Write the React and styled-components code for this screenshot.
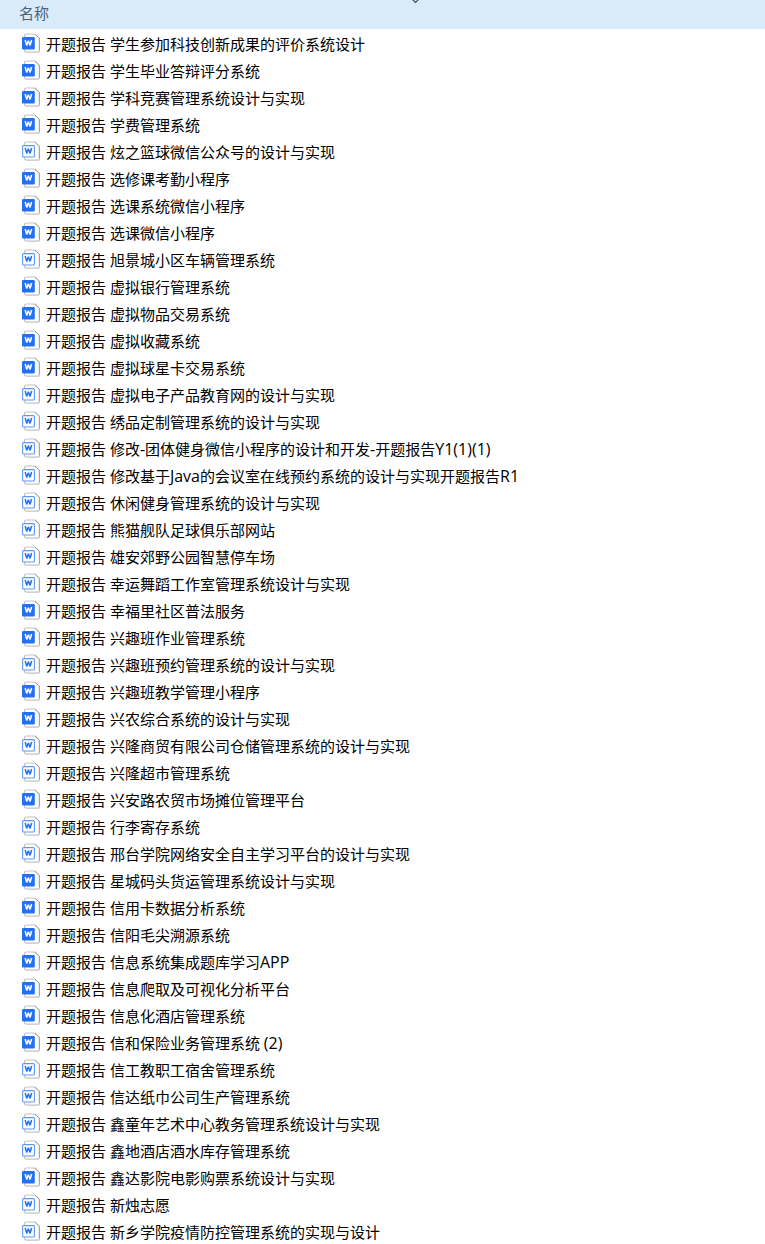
import React from 'react';
import styled, { createGlobalStyle } from 'styled-components';

const GlobalStyle = createGlobalStyle`
  body {
    margin: 0;
    background: #ffffff;
    color: #000000;
    font-family: 'Open Sans', 'Noto Sans CJK SC', sans-serif;
  }
`;

const Pane = styled.main`
  height: 100vh;
  overflow-x: hidden;
  overflow-y: auto;
  scrollbar-width: none;
`;

const FileTable = styled.table`
  width: 100%;
  border-collapse: collapse;
`;

const HeaderCell = styled.th`
  position: relative;
  height: 29px;
  padding: 0;
  background: #d9ebf9;
  text-align: left;
`;

const SortButton = styled.button`
  display: block;
  width: 100%;
  height: 29px;
  padding: 0 0 2px 19px;
  border: 0;
  background: transparent;
  color: #4c607a;
  font: inherit;
  font-size: 15px;
  font-weight: 400;
  line-height: 27px;
  text-align: left;
`;

const SortArrow = styled.svg`
  position: absolute;
  top: 0;
  left: 411px;
  width: 9px;
  height: 4px;
`;

const FileBody = styled.tbody`
  &::before {
    content: '';
    display: block;
    height: 2px;
  }
`;

const FileCell = styled.td`
  height: 27px;
  padding: 0;
`;

const FileEntry = styled.div`
  display: flex;
  align-items: center;
  gap: 6px;
  height: 27px;
  padding-left: 22px;
  overflow: hidden;
`;

const FileIcon = styled.svg`
  flex: none;
  width: 18px;
  height: 20px;
  margin-bottom: 3px;
`;

const FileName = styled.span`
  font-size: 15px;
  line-height: 27px;
  white-space: nowrap;
`;

const Latin = styled.span`
  font-size: 16px;
`;

function WordIcon({ filled }) {
  return (
    <FileIcon viewBox="0 0 18 20" fill="none" aria-hidden="true">
      <path
        d="M2.5 4V3Q2.5 1 4.5 1H13L17.4 5.4V17.2Q17.4 19.2 15.2 19.2H4.8Q2.5 19.2 2.5 17V16"
        fill="#ffffff"
        stroke="#c4c4c4"
        strokeWidth="1.2"
      />
      <path d="M13 1L17.4 5.4V17.5" stroke="#a0a0a0" />
      {filled ? (
        <rect x="0" y="4" width="12.8" height="12.4" rx="1.2" fill="#2370f5" />
      ) : (
        <rect x=".6" y="4.6" width="11.8" height="11.4" rx="1" fill="#ffffff" stroke="#5c98fa" strokeWidth="1.1" />
      )}
      <path
        d="M3.2 7L4.7 12.4L6.4 7.8L8.1 12.4L9.6 7"
        stroke={filled ? '#ffffff' : '#2370f5'}
        strokeWidth="1.5"
        strokeLinejoin="bevel"
      />
    </FileIcon>
  );
}

const files = [
  ['学生参加科技创新成果的评价系统设计', true],
  ['学生毕业答辩评分系统', true],
  ['学科竞赛管理系统设计与实现', true],
  ['学费管理系统', true],
  ['炫之篮球微信公众号的设计与实现', false],
  ['选修课考勤小程序', true],
  ['选课系统微信小程序', true],
  ['选课微信小程序', true],
  ['旭景城小区车辆管理系统', false],
  ['虚拟银行管理系统', true],
  ['虚拟物品交易系统', true],
  ['虚拟收藏系统', true],
  ['虚拟球星卡交易系统', true],
  ['虚拟电子产品教育网的设计与实现', false],
  ['绣品定制管理系统的设计与实现', false],
  ['修改-团体健身微信小程序的设计和开发-开题报告Y1(1)(1)', false],
  ['修改基于Java的会议室在线预约系统的设计与实现开题报告R1', false],
  ['休闲健身管理系统的设计与实现', false],
  ['熊猫舰队足球俱乐部网站', false],
  ['雄安郊野公园智慧停车场', false],
  ['幸运舞蹈工作室管理系统设计与实现', false],
  ['幸福里社区普法服务', true],
  ['兴趣班作业管理系统', true],
  ['兴趣班预约管理系统的设计与实现', false],
  ['兴趣班教学管理小程序', true],
  ['兴农综合系统的设计与实现', true],
  ['兴隆商贸有限公司仓储管理系统的设计与实现', false],
  ['兴隆超市管理系统', false],
  ['兴安路农贸市场摊位管理平台', true],
  ['行李寄存系统', false],
  ['邢台学院网络安全自主学习平台的设计与实现', false],
  ['星城码头货运管理系统设计与实现', true],
  ['信用卡数据分析系统', true],
  ['信阳毛尖溯源系统', true],
  ['信息系统集成题库学习APP', true],
  ['信息爬取及可视化分析平台', true],
  ['信息化酒店管理系统', true],
  ['信和保险业务管理系统 (2)', true],
  ['信工教职工宿舍管理系统', false],
  ['信达纸巾公司生产管理系统', false],
  ['鑫童年艺术中心教务管理系统设计与实现', false],
  ['鑫地酒店酒水库存管理系统', false],
  ['鑫达影院电影购票系统设计与实现', true],
  ['新烛志愿', false],
  ['新乡学院疫情防控管理系统的实现与设计', false],
];

// Latin runs are set one size up so they balance with the Chinese glyphs.
function mixedText(text) {
  return text
    .split(/([A-Za-z0-9()-]+)/)
    .map((part, i) => (i % 2 ? <Latin key={i}>{part}</Latin> : part));
}

export default function App() {
  return (
    <Pane lang="zh-CN">
      <GlobalStyle />
      <FileTable>
        <thead>
          <tr>
            <HeaderCell scope="col" aria-sort="descending">
              <SortButton type="button">名称</SortButton>
              <SortArrow viewBox="0 0 9 4" fill="none" aria-hidden="true">
                <path d="M1 -1L4.5 2.5L8 -1" stroke="#4a4a4a" strokeWidth="1.2" />
              </SortArrow>
            </HeaderCell>
          </tr>
        </thead>
        <FileBody>
          {files.map(([title, filled]) => (
            <tr key={title}>
              <FileCell>
                <FileEntry>
                  <WordIcon filled={filled} />
                  <FileName>开题报告 {mixedText(title)}</FileName>
                </FileEntry>
              </FileCell>
            </tr>
          ))}
        </FileBody>
      </FileTable>
    </Pane>
  );
}
